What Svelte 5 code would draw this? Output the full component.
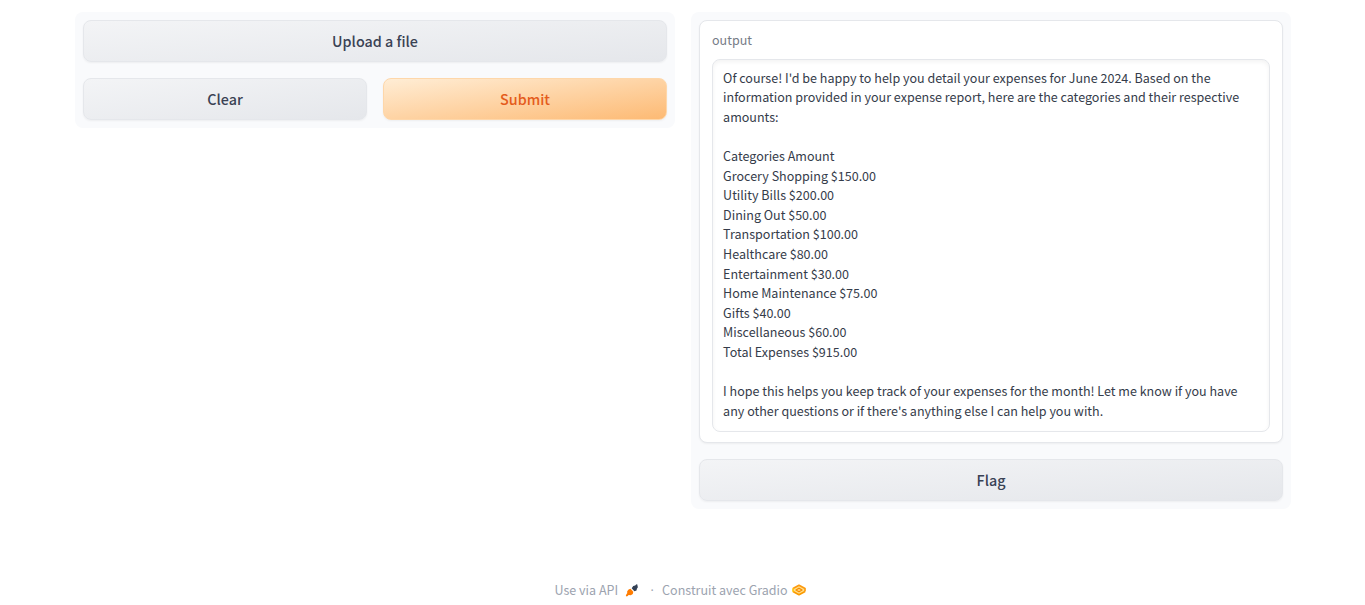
<script>
  const reply = `Of course! I'd be happy to help you detail your expenses for June 2024. Based on the
information provided in your expense report, here are the categories and their respective
amounts:

Categories Amount
Grocery Shopping $150.00
Utility Bills $200.00
Dining Out $50.00
Transportation $100.00
Healthcare $80.00
Entertainment $30.00
Home Maintenance $75.00
Gifts $40.00
Miscellaneous $60.00
Total Expenses $915.00

I hope this helps you keep track of your expenses for the month! Let me know if you have
any other questions or if there's anything else I can help you with.`;
</script>

<div class="page">
  <main>
    <section class="panel">
      <button>Upload a file</button>
      <div class="row">
        <button>Clear</button>
        <button class="primary">Submit</button>
      </div>
    </section>
    <section class="panel">
      <div class="block">
        <span class="label">output</span>
        <div class="textbox">{reply}</div>
      </div>
      <button>Flag</button>
    </section>
  </main>
  <footer>
    <span class="api">Use via API</span>
    <svg class="rocket" width="14" height="14" viewBox="0 0 14 14">
      <path d="M6.7 5.3 8.2 3.1 10.2 2.5 11.4 1.2 12.6 1.7 12.4 3.1 13 3.9 11.9 5.8 11.5 7.4 9.4 8.2Z" fill="#334155" />
      <path d="M5.5 5.8 8.3 8.8 7.8 10.9 5.8 12.3 3.7 12 2 13.5 .8 13 1.4 11.2 2.2 10.2 2.2 8.3 3.6 6.4Z" fill="#ff7c00" />
    </svg>
    <span class="dot">·</span>
    <span class="built">Construit avec Gradio</span>
    <svg class="logo" width="14" height="14" viewBox="0 0 14 14" fill="none" stroke-linejoin="round">
      <path d="M1 5.6 7 2.2 13 5.6V8.4L7 11.8 1 8.4Z" fill="#ffe08a" />
      <path d="M1 8.4 7 11.7 13 8.4" stroke="#fb9a00" stroke-width="1.7" />
      <path d="M1 5.6 7 2.3 13 5.6V8.4" stroke="#fc9a10" stroke-width="1.7" />
      <path d="M1 5.2V8.8" stroke="#ffc400" stroke-width="1.6" />
      <path d="M4 7 7 5.2 10 7 7 8.8Z" stroke="#f98a00" stroke-width="1.3" />
    </svg>
  </footer>
</div>

<style>
  :global(body) {
    background: #fff;
  }
  .page {
    box-sizing: border-box;
    height: 605px;
    padding-top: 12px;
    overflow: hidden;
    font-family: "Noto Sans CJK SC", "Open Sans", sans-serif;
    display: flex;
    flex-direction: column;
    align-items: center;
  }
  main {
    display: flex;
    align-items: flex-start;
    gap: 16px;
    width: 1216px;
    height: 497px;
  }
  .panel {
    box-sizing: border-box;
    flex: 1;
    min-width: 0;
    display: flex;
    flex-direction: column;
    gap: 16px;
    padding: 8px;
    border-radius: 8px;
    background: #f9fafc;
  }
  .row {
    display: flex;
    gap: 16px;
  }
  .row button {
    flex: 1;
  }
  button {
    box-sizing: border-box;
    height: 42px;
    padding: 0 0 0 1px;
    border: 1px solid #e5e7eb;
    border-radius: 8px;
    background: linear-gradient(to bottom right, #f3f4f6, #e5e7eb);
    box-shadow: 0 1px 2px rgba(0, 0, 0, 0.05);
    color: #3a4254;
    font-family: inherit;
    font-size: 14.33px;
    font-weight: 500;
    line-height: 22px;
  }
  .primary {
    border-color: #fed7aa;
    background: linear-gradient(to bottom right, #ffedd5, #fdba74);
    color: #e45c1c;
  }
  .block {
    box-sizing: border-box;
    height: 423px;
    padding: 9px 12px 10px;
    border: 1px solid #e5e7eb;
    border-radius: 8px;
    background: #fff;
    box-shadow: 0 1px 2px rgba(0, 0, 0, 0.05);
  }
  .label {
    display: block;
    height: 20px;
    margin-bottom: 9px;
    padding-left: 0.5px;
    line-height: 20px;
    font-size: 12.53px;
    color: #777c87;
  }
  .textbox {
    box-sizing: border-box;
    height: 373px;
    padding: 7.7px 10px 8px 10.6px;
    border: 1px solid #e5e7eb;
    border-radius: 8px;
    box-shadow: inset 0 2px 4px rgba(0, 0, 0, 0.05);
    color: #353c4a;
    font-size: 12.54px;
    line-height: 19.6px;
    white-space: pre;
  }
  footer {
    display: flex;
    align-items: center;
    width: 256px;
    height: 24px;
    margin-top: 69px;
    color: #9ca3af;
    font-size: 12.53px;
    line-height: 24px;
    white-space: nowrap;
  }
  .rocket {
    margin-left: 7px;
  }
  .dot {
    width: 4px;
    margin: 0 8px 0 11px;
    padding-top: 1px;
    font-family: "Open Sans", sans-serif;
    text-align: center;
  }
  .logo {
    margin-left: 4px;
  }
</style>
